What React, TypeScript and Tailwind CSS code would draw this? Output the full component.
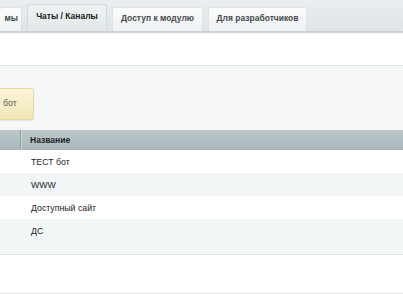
const tabs = [
    { label: "мы", active: false, cls: "w-[22px] justify-end pr-[3px] border-l-0" },
    { label: "Чаты / Каналы", active: true, cls: "w-[80px] justify-center" },
    { label: "Доступ к модулю", active: false, cls: "w-[91px] justify-center" },
    { label: "Для разработчиков", active: false, cls: "w-[99px] justify-center" },
]

const rows = ["ТЕСТ бот", "WWW", "Доступный сайт", "ДС"]

const App = () => {
    return (
        <div className="w-[403px] h-[294px] overflow-hidden bg-white font-['Liberation_Sans',Arial,sans-serif]">
            {/* Tabs */}
            <div className="h-[33px] flex items-end gap-[5px] bg-gradient-to-b from-[#e9eeef] to-[#dfe5e7] border-b-2 border-[#c9d2d4]">
                {tabs.map(tab => (
                    <div
                        key={tab.label}
                        className={
                            "flex items-center text-[8.5px] font-bold rounded-t-[3px] border border-b-0 " +
                            tab.cls + " " +
                            (tab.active
                                ? "h-[27px] pb-[3px] bg-gradient-to-b from-[#eef2f3] to-[#e2e8e9] border-[#d0d9db] text-[#1a1f20]"
                                : "h-[24px] pb-[2px] bg-gradient-to-b from-[#fbfcfc] to-[#eef2f2] border-[#dde3e4] text-[#45494a]")
                        }
                    >
                        {tab.label}
                    </div>
                ))}
            </div>

            {/* Blank area */}
            <div className="h-[33px] border-b border-[#e1e6e7]" />

            {/* Toolbar */}
            <div className="h-[64px] bg-[#f5f7f8] flex items-center">
                <div className="h-[32px] w-[34px] mt-[12px] flex items-center pl-[3px] text-[8.75px] text-[#555] rounded-r-[4px] border border-l-0 border-[#e3d9a4] bg-gradient-to-b from-[#fbf6dc] to-[#f0e6b4] shadow-[0_1px_1px_rgba(0,0,0,0.08)]">
                    бот
                </div>
            </div>

            {/* Table */}
            <div className="flex h-[20px] bg-gradient-to-b from-[#bcc8cc] to-[#a9b7bb] text-[8.5px] font-bold text-[#1d2222]">
                <div className="w-[21px] border-r border-[#8f9ea3]" />
                <div className="flex items-center pl-[8px] border-l border-[#cdd6d9]">Название</div>
            </div>
            {rows.map((row, i) => (
                <div
                    key={row}
                    className={"h-[23px] flex items-center pt-[2px] pl-[31px] text-[8.75px] text-[#222] " + (i % 2 ? "bg-[#f3f6f7]" : "bg-white")}
                >
                    {row}
                </div>
            ))}
            <div className="h-[13px] bg-[#f3f6f7] border-b border-[#dde6e5]" />
            <div className="h-[39px] bg-white border-b border-[#e2e6e7]" />
        </div>
    )
}

export default App
